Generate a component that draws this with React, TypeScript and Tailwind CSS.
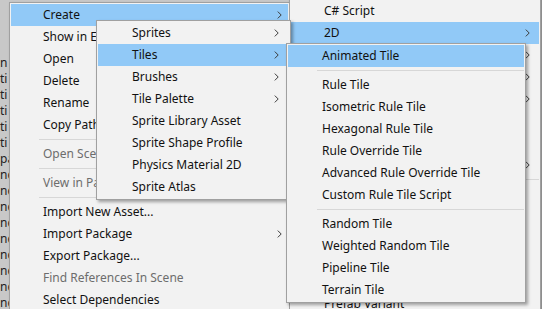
type Item = { label: string; disabled?: boolean; arrow?: boolean; active?: boolean } | "sep";

const mainItems: Item[] = [
  { label: "Create", arrow: true, active: true },
  { label: "Show in Explorer" },
  { label: "Open" },
  { label: "Delete" },
  { label: "Rename" },
  { label: "Copy Path" },
  "sep",
  { label: "Open Scene Additive", disabled: true },
  "sep",
  { label: "View in Package Manager", disabled: true },
  "sep",
  { label: "Import New Asset..." },
  { label: "Import Package", arrow: true },
  { label: "Export Package..." },
  { label: "Find References In Scene", disabled: true },
  { label: "Select Dependencies" },
  "sep",
  { label: "Refresh" },
];

const createItems: Item[] = [
  { label: "Folder" },
  "sep",
  { label: "C# Script" },
  { label: "2D", arrow: true, active: true },
  { label: "Visual Scripting", arrow: true },
  { label: "Shader", arrow: true },
  { label: "Testing", arrow: true },
  { label: "Assembly Definition" },
  { label: "Assembly Definition Reference" },
  { label: "TextMeshPro", arrow: true },
  "sep",
  { label: "Scene" },
  { label: "Scene Template" },
  { label: "Scene Template From Scene" },
  { label: "Volume Profile" },
  { label: "Prefab" },
  { label: "Prefab Variant" },
];

const twoDItems: Item[] = [
  { label: "Sprites", arrow: true },
  { label: "Tiles", arrow: true, active: true },
  { label: "Brushes", arrow: true },
  { label: "Tile Palette", arrow: true },
  { label: "Sprite Library Asset" },
  { label: "Sprite Shape Profile" },
  { label: "Physics Material 2D" },
  { label: "Sprite Atlas" },
];

const tileItems: Item[] = [
  { label: "Animated Tile", active: true },
  "sep",
  { label: "Rule Tile" },
  { label: "Isometric Rule Tile" },
  { label: "Hexagonal Rule Tile" },
  { label: "Rule Override Tile" },
  { label: "Advanced Rule Override Tile" },
  { label: "Custom Rule Tile Script" },
  "sep",
  { label: "Random Tile" },
  { label: "Weighted Random Tile" },
  { label: "Pipeline Tile" },
  { label: "Terrain Tile" },
];

const stripText = ["n", "ti", "ti", "ti", "ti", "ti", "pa", "nc", "nc", "nc", "nc", "nc", "nc", "nc", "nc", "nc"];

function Chevron() {
  return (
    <svg width="5" height="8" viewBox="0 0 5 8" className="shrink-0">
      <polyline points="0.8,0.6 4.2,4 0.8,7.4" fill="none" stroke="#3c3c3c" strokeWidth="1" />
    </svg>
  );
}

function Menu({ items, className, textPad, arrowPad }: { items: Item[]; className: string; textPad: string; arrowPad: string }) {
  return (
    <div className={`absolute flex flex-col border border-[#a0a0a0] bg-[#f2f2f2] p-px shadow-[2px_2px_3px_rgba(0,0,0,0.35)] ${className}`}>
      {items.map((it, i) =>
        it === "sep" ? (
          <div key={i} className={`my-[3px] h-px bg-[#d7d7d7] ${textPad === "pl-[32px]" ? "ml-[28px]" : "ml-[29px]"}`} />
        ) : (
          <div
            key={i}
            className={`flex h-[22px] shrink-0 items-center justify-between ${textPad} ${arrowPad} ${it.active ? "bg-[#91c9f7]" : ""} ${it.disabled ? "text-[#6d6d6d]" : "text-[#111]"}`}
          >
            <span className="whitespace-nowrap">{it.label}</span>
            {it.arrow && <Chevron />}
          </div>
        )
      )}
    </div>
  );
}

export default function App() {
  return (
    <div className="relative h-[309px] w-[542px] overflow-hidden bg-[#c8c8c8] font-['Noto_Sans',sans-serif] text-[12px]">
      <div className="flex w-[9px] flex-col overflow-hidden pt-[55px] text-[12px] leading-[16px] text-[#222]">
        {stripText.map((t, i) => (
          <span key={i} className="whitespace-nowrap">{t}</span>
        ))}
      </div>

      <Menu items={mainItems} className="left-[9px] top-[2px] w-[281px]" textPad="pl-[32px]" arrowPad="pr-[6px]" />
      <Menu items={createItems} className="left-[289px] top-[-31px] w-[252px]" textPad="pl-[33px]" arrowPad="pr-[9px]" />
      <Menu items={twoDItems} className="left-[96px] top-[20px] w-[195px]" textPad="pl-[34px]" arrowPad="pr-[10px]" />
      <Menu items={tileItems} className="left-[286px] top-[43px] w-[240px]" textPad="pl-[34px]" arrowPad="pr-[10px]" />
    </div>
  );
}
